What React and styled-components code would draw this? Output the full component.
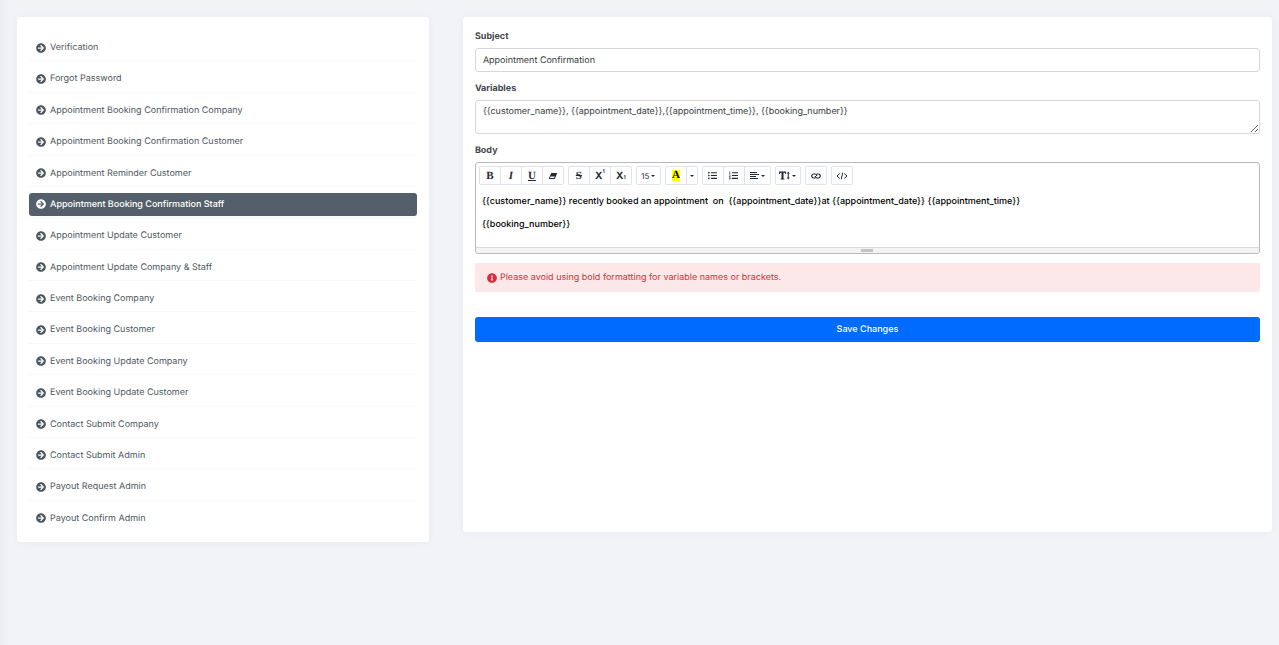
import React from "react";
import styled, { createGlobalStyle, css } from "styled-components";
import {
  FaArrowCircleRight,
  FaInfoCircle,
  FaListUl,
  FaListOl,
} from "react-icons/fa";

const GlobalStyle = createGlobalStyle`
  *, *::before, *::after { box-sizing: border-box; }
  body {
    margin: 0;
    min-height: 100vh;
    background: linear-gradient(to right, #ebedf1, #f2f3f7 10px) #f2f3f7;
    font-family: Inter, "Liberation Sans", sans-serif;
    color: #4d5760;
    text-rendering: geometricPrecision;
  }
  button, input, textarea { font-family: inherit; text-rendering: inherit; }
`;

const Page = styled.main`
  display: grid;
  grid-template-columns: minmax(0, 28fr) minmax(0, 55fr);
  align-items: start;
  gap: 34px;
  padding: 17px 7px 17px 17px;
`;

const Card = styled.section`
  background: #fff;
  border-radius: 3px;
  box-shadow: 0 0 10px rgba(40, 50, 90, 0.04);
`;

const MenuCard = styled(Card)`
  padding: 13px 12px 10px;
`;

const FormCard = styled(Card)`
  padding: 12px;
  min-height: 515px;
`;

const Menu = styled.ul`
  list-style: none;
  margin: 0;
  padding: 0;
  display: grid;
  grid-auto-rows: 1fr;
  min-height: 502px;
`;

const MenuItem = styled.li`
  padding-top: 6px;
  border-bottom: 1px solid #f8f8f9;
  &:last-child { border-bottom-color: transparent; }
`;

const MenuLink = styled.a`
  display: flex;
  align-items: center;
  gap: 4px;
  height: 23px;
  padding: 0 7px;
  border-radius: 3px;
  font-size: 9px;
  color: #4d5760;
  text-decoration: none;
  svg { width: 10px; height: 10px; flex: none; }
  ${(p) => p.$active && css`
    background: #555f6b;
    color: #fff;
    font-weight: 500;
  `}
`;

const Label = styled.label`
  display: block;
  margin-bottom: 3px;
  font-size: 9px;
  line-height: 16px;
  font-weight: 700;
  color: #43474c;
`;

const Field = styled.div`
  margin-bottom: 9px;
`;

const control = css`
  display: block;
  width: 100%;
  padding: 3px 7px;
  border: 1px solid #d5d9dd;
  border-radius: 3px;
  background: #fff;
  color: #343a40;
  font-size: 9px;
  line-height: 16px;
  outline: none;
`;

const Input = styled.input`
  ${control}
  height: 24px;
`;

const TextArea = styled.textarea`
  ${control}
  height: 34px;
  overflow: hidden;
  resize: vertical;
`;

const Editor = styled.div`
  border: 1px solid #b9b9b9;
  border-radius: 3px;
  overflow: hidden;
  margin-bottom: 9px;
`;

const Toolbar = styled.div`
  display: flex;
  flex-wrap: wrap;
  gap: 4px;
  padding: 3px;
`;

const Group = styled.div`
  display: flex;
  gap: 1px;
  border: 1px solid #dfe4ec;
  border-radius: 2px;
  background: #dfe4ec;
`;

const Tool = styled.button`
  display: flex;
  align-items: center;
  justify-content: center;
  gap: 2px;
  flex: none;
  width: ${(p) => p.$width || 20}px;
  min-width: 0;
  height: 17px;
  margin: 0;
  padding: 0;
  border: 0;
  background: #fff;
  color: #1f2a37;
  font-size: 8px;
  svg { flex: none; }
`;

const Glyph = styled.span`
  font: ${(p) => (p.$italic ? "italic" : "normal")} 700 11px/12px "Liberation Serif", serif;
  text-decoration: ${(p) => p.$line || "none"};
`;

const Script = styled.span`
  font-size: 10px;
  font-weight: 700;
  line-height: 12px;
`;

const Tiny = styled.span`
  align-self: ${(p) => (p.$low ? "flex-end" : "flex-start")};
  margin: 3px 0 3px -2px;
  font-size: 5px;
  line-height: 5px;
  font-weight: 700;
`;

const Highlight = styled.span`
  width: 8px;
  background: #ff0;
  color: #000;
  font: 700 11px/11px "Liberation Serif", serif;
`;

const Caret = styled.span`
  border: 2px solid transparent;
  border-top-color: currentColor;
  border-bottom: 0;
`;

const Content = styled.div`
  height: 59px;
  padding: 6px;
  font-size: 9px;
  line-height: 15px;
  font-weight: 500;
  color: #000;
  outline: none;
  white-space: pre-wrap;
  p { margin: 0 0 8px; }
`;

const Grip = styled.div`
  display: flex;
  justify-content: center;
  height: 6px;
  padding-top: 1px;
  border-top: 1px solid #dadada;
  background: #f3f3f3;
  cursor: ns-resize;
  &::after {
    content: "";
    width: 12px;
    height: 3px;
    background: #c4c4c4;
  }
`;

const Alert = styled.div`
  display: flex;
  align-items: center;
  gap: 3px;
  height: 29px;
  padding: 0 12px;
  border-radius: 2px;
  background: #fce8e9;
  color: #dc2a3f;
  font-size: 9px;
  svg { width: 10px; height: 10px; flex: none; }
`;

const Save = styled.button`
  display: block;
  width: 100%;
  height: 25px;
  margin-top: 25px;
  padding: 0;
  border: 0;
  border-radius: 3px;
  background: #006bff;
  color: #fff;
  font-size: 9px;
  font-weight: 500;
`;

const templates = [
  "Verification",
  "Forgot Password",
  "Appointment Booking Confirmation Company",
  "Appointment Booking Confirmation Customer",
  "Appointment Reminder Customer",
  "Appointment Booking Confirmation Staff",
  "Appointment Update Customer",
  "Appointment Update Company & Staff",
  "Event Booking Company",
  "Event Booking Customer",
  "Event Booking Update Company",
  "Event Booking Update Customer",
  "Contact Submit Company",
  "Contact Submit Admin",
  "Payout Request Admin",
  "Payout Confirm Admin",
];

const activeTemplate = "Appointment Booking Confirmation Staff";

function LineHeightIcon() {
  return (
    <svg width="11" height="9" viewBox="0 0 22 18" fill="currentColor" aria-hidden="true">
      <path d="M0 1h14v5h-1.500l-1-2.500H9V15l2 .6V17H3v-1.400l2-.6V3.500H2.500L1.500 6H0z" />
      <path d="M18.500 1l3 4h-2v8h2l-3 4-3-4h2V5h-2z" />
    </svg>
  );
}

function EraserIcon() {
  return (
    <svg width="8" height="8" viewBox="0 0 16 16" fill="currentColor" aria-hidden="true">
      <path d="M5.500 2H15a1 1 0 0 1 .9 1.400L12 13a1.500 1.500 0 0 1-1.400 1H1a1 1 0 0 1-.9-1.400L4 3a1.500 1.500 0 0 1 1.500-1zM3.200 9L2 12.200h8L11.500 9z" />
    </svg>
  );
}

function AlignLeftIcon() {
  return (
    <svg width="9" height="8" viewBox="0 0 9 8" fill="currentColor" aria-hidden="true">
      <path d="M0 0h7v1H0zM0 2h9v1H0zM0 4h6v1H0zM0 6h8v1H0z" />
    </svg>
  );
}

function LinkIcon() {
  return (
    <svg width="10" height="6" viewBox="0 0 20 12" fill="none" stroke="currentColor" strokeWidth="2.400" aria-hidden="true">
      <path d="M9 9.500A4 4 0 0 1 6.500 10H5.500a4 4 0 0 1 0-8h2a4 4 0 0 1 4 4" />
      <path d="M11 2.500A4 4 0 0 1 13.500 2h1a4 4 0 0 1 0 8h-2a4 4 0 0 1-4-4" />
    </svg>
  );
}

function CodeIcon() {
  return (
    <svg width="12" height="8" viewBox="0 0 24 16" fill="none" stroke="currentColor" strokeWidth="2" aria-hidden="true">
      <path d="M7.500 3L2 8l5.500 5M16.500 3L22 8l-5.500 5M13.500 1.500l-3 13" />
    </svg>
  );
}

function EditorToolbar() {
  return (
    <Toolbar role="toolbar" aria-label="Formatting">
      <Group>
        <Tool type="button" aria-label="Bold"><Glyph>B</Glyph></Tool>
        <Tool type="button" aria-label="Italic"><Glyph $italic>I</Glyph></Tool>
        <Tool type="button" aria-label="Underline"><Glyph $line="underline">U</Glyph></Tool>
        <Tool type="button" aria-label="Remove formatting"><EraserIcon /></Tool>
      </Group>
      <Group>
        <Tool type="button" aria-label="Strikethrough"><Glyph $line="line-through">S</Glyph></Tool>
        <Tool type="button" aria-label="Superscript"><Script>X</Script><Tiny>1</Tiny></Tool>
        <Tool type="button" aria-label="Subscript"><Script>X</Script><Tiny $low>1</Tiny></Tool>
      </Group>
      <Group>
        <Tool type="button" aria-label="Font size" $width={23}>15<Caret /></Tool>
      </Group>
      <Group>
        <Tool type="button" aria-label="Text color"><Highlight>A</Highlight></Tool>
        <Tool type="button" aria-label="More colors" $width={10}><Caret /></Tool>
      </Group>
      <Group>
        <Tool type="button" aria-label="Bulleted list"><FaListUl size={9} /></Tool>
        <Tool type="button" aria-label="Numbered list"><FaListOl size={9} /></Tool>
        <Tool type="button" aria-label="Paragraph" $width={25}><AlignLeftIcon /><Caret /></Tool>
      </Group>
      <Group>
        <Tool type="button" aria-label="Line height" $width={24}><LineHeightIcon /><Caret /></Tool>
      </Group>
      <Group>
        <Tool type="button" aria-label="Link"><LinkIcon /></Tool>
      </Group>
      <Group>
        <Tool type="button" aria-label="Code view"><CodeIcon /></Tool>
      </Group>
    </Toolbar>
  );
}

export default function App() {
  return (
    <>
      <GlobalStyle />
      <Page>
        <MenuCard as="nav" aria-label="Email templates">
          <Menu>
            {templates.map((name) => (
              <MenuItem key={name}>
                <MenuLink href="#" $active={name === activeTemplate}>
                  <FaArrowCircleRight />
                  {name}
                </MenuLink>
              </MenuItem>
            ))}
          </Menu>
        </MenuCard>
        <FormCard>
          <form>
            <Field>
              <Label htmlFor="subject">Subject</Label>
              <Input id="subject" defaultValue="Appointment Confirmation" />
            </Field>
            <Field>
              <Label htmlFor="variables">Variables</Label>
              <TextArea
                id="variables"
                defaultValue="{{customer_name}}, {{appointment_date}},{{appointment_time}}, {{booking_number}}"
              />
            </Field>
            <Label as="div" id="body-label">Body</Label>
            <Editor>
              <EditorToolbar />
              <Content
                role="textbox"
                aria-labelledby="body-label"
                contentEditable
                suppressContentEditableWarning
              >
                <p>{"{{customer_name}} recently booked an appointment  on  {{appointment_date}}at {{appointment_date}} {{appointment_time}}"}</p>
                <p>{"{{booking_number}}"}</p>
              </Content>
              <Grip />
            </Editor>
            <Alert role="note">
              <FaInfoCircle />
              Please avoid using bold formatting for variable names or brackets.
            </Alert>
            <Save type="button">Save Changes</Save>
          </form>
        </FormCard>
      </Page>
    </>
  );
}
